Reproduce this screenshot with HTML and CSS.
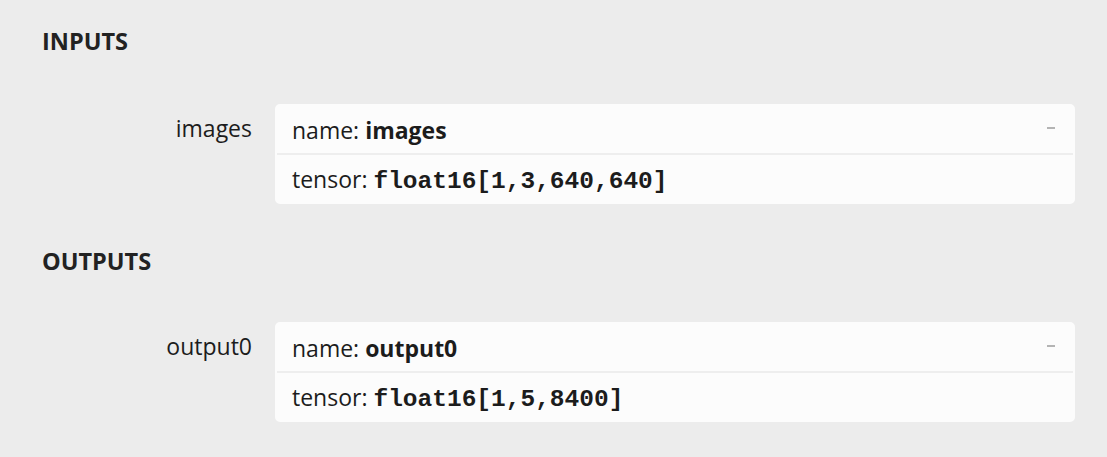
FILE: index.html
```html
<!DOCTYPE html>
<html>
<head>
<meta charset="utf-8">
<link rel="stylesheet" href="styles.css">
</head>
<body>
<div class="panel">
  <div class="section-title">INPUTS</div>
  <div class="item">
    <div class="item-name">images</div>
    <div class="card">
      <div class="row">
        <span>name: <b>images</b></span>
        <span class="toggle"></span>
      </div>
      <div class="row row-border">
        <span>tensor: <code>float16[1,3,640,640]</code></span>
      </div>
    </div>
  </div>
  <div class="section-title section-title-2">OUTPUTS</div>
  <div class="item item-2">
    <div class="item-name">output0</div>
    <div class="card">
      <div class="row">
        <span>name: <b>output0</b></span>
        <span class="toggle"></span>
      </div>
      <div class="row row-border">
        <span>tensor: <code>float16[1,5,8400]</code></span>
      </div>
    </div>
  </div>
</div>
</body>
</html>
```
FILE: styles.css
```css
html, body {
  margin: 0;
  padding: 0;
  background: #ececec;
}
body {
  font-family: "Open Sans", "Noto Sans", sans-serif;
  color: #1c1c1c;
  font-size: 23px;
}
.panel {
  padding: 25px 32px 0 42px;
}
.section-title {
  font-weight: bold;
  font-size: 23.5px;
  line-height: 32px;
  color: #222;
}
.section-title-2 {
  margin-top: 41px;
}
.item {
  display: grid;
  grid-template-columns: 210px 1fr;
  column-gap: 23px;
  margin-top: 47px;
}
.item-2 {
  margin-top: 45px;
}
.item-name {
  text-align: right;
  line-height: 47px;
  padding-top: 1px;
}
.card {
  background: #fcfcfc;
  border: 2px solid #fcfcfc;
  border-radius: 5px;
}
.row {
  display: flex;
  align-items: center;
  height: 47px;
  padding: 0 18px 0 15px;
}
.row-border {
  border-top: 2px solid #eeeeee;
}
.row b {
  font-weight: bold;
}
code {
  font-family: "Liberation Mono", monospace;
  font-weight: bold;
  font-size: 24.5px;
}
.toggle {
  margin-left: auto;
  margin-bottom: 3px;
  width: 8px;
  height: 2px;
  background: #b4b4b4;
}
```
